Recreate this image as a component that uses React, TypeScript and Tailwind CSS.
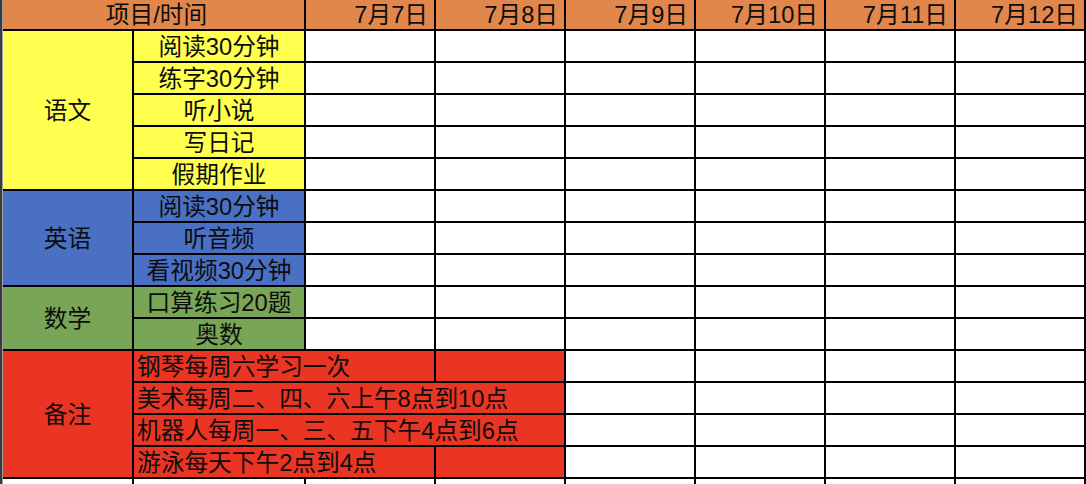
import { Fragment } from "react";

const dates = ["7月7日", "7月8日", "7月9日", "7月10日", "7月11日", "7月12日"];

type Group = {
  name: string;
  bg: string;
  items: string[];
};

const groups: Group[] = [
  { name: "语文", bg: "bg-[#ffff50]", items: ["阅读30分钟", "练字30分钟", "听小说", "写日记", "假期作业"] },
  { name: "英语", bg: "bg-[#4a70c4]", items: ["阅读30分钟", "听音频", "看视频30分钟"] },
  { name: "数学", bg: "bg-[#78a556]", items: ["口算练习20题", "奥数"] },
];

const spans: Record<number, string> = {
  2: "row-span-2",
  3: "row-span-3",
  4: "row-span-4",
  5: "row-span-5",
};

// notes: text and whether the red text cell runs over three columns
const notes: { text: string; wide: boolean }[] = [
  { text: "钢琴每周六学习一次", wide: false },
  { text: "美术每周二、四、六上午8点到10点", wide: true },
  { text: "机器人每周一、三、五下午4点到6点", wide: true },
  { text: "游泳每天下午2点到4点", wide: false },
];

const cell = "flex items-center leading-none whitespace-nowrap overflow-hidden pt-[3px]";

function Blank({ count }: { count: number }) {
  return (
    <>
      {Array.from({ length: count }).map((_, i) => (
        <div key={i} className="bg-white" />
      ))}
    </>
  );
}

export default function App() {
  return (
    <div className="flex w-[1086px] h-[484px] overflow-hidden bg-white font-['Liberation_Sans','Noto_Sans_CJK_SC',sans-serif] text-[23.7px] text-[#0d0d0d]">
      {/* row header edge of the sheet */}
      <div className="w-[3px] shrink-0 bg-[#a0a0a0] border-l-2 border-[#3a3a3a]" />

      <div className="grid grid-cols-[129px_170px_repeat(6,128px)] grid-rows-[29px_repeat(14,30px)_10px] gap-[2px] bg-black pr-[2px] h-fit">
        <div className={`${cell} col-span-2 justify-center bg-[#e2874c] pl-[6px]`}>项目/时间</div>
        {dates.map(d => (
          <div key={d} className={`${cell} justify-end bg-[#e2874c] pr-[6px]`}>{d}</div>
        ))}

        {groups.map(g => (
          <Fragment key={g.name}>
            {g.items.map((item, i) => (
              <Fragment key={item + i}>
                {i === 0 && (
                  <div className={`${cell} ${spans[g.items.length]} justify-center ${g.bg}`}>{g.name}</div>
                )}
                <div className={`${cell} justify-center ${g.bg}`}>{item}</div>
                <Blank count={6} />
              </Fragment>
            ))}
          </Fragment>
        ))}

        {notes.map((n, i) => (
          <Fragment key={n.text}>
            {i === 0 && (
              <div className={`${cell} row-span-4 justify-center bg-[#ea3424]`}>备注</div>
            )}
            {n.wide ? (
              <div className={`${cell} col-span-3 bg-[#ea3424] pl-[3px]`}>{n.text}</div>
            ) : (
              <>
                <div className={`${cell} col-span-2 bg-[#ea3424] pl-[3px]`}>{n.text}</div>
                <div className="bg-[#ea3424]" />
              </>
            )}
            <Blank count={4} />
          </Fragment>
        ))}

        <Blank count={8} />
      </div>
    </div>
  );
}
